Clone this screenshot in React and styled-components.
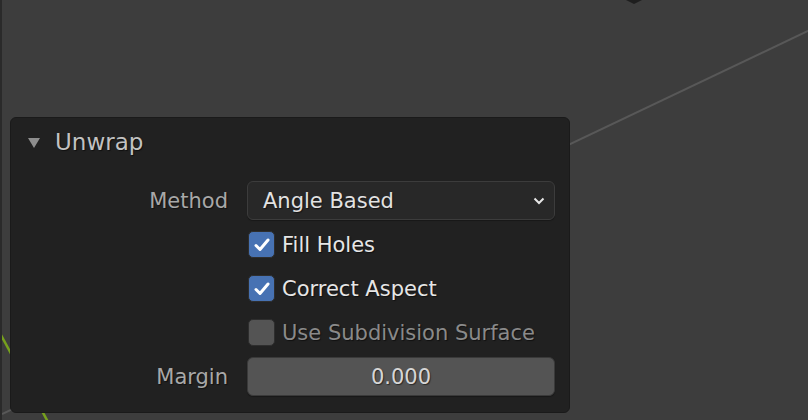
import React from "react";
import styled, { createGlobalStyle } from "styled-components";

const GlobalStyle = createGlobalStyle`
  html, body {
    margin: 0;
    padding: 0;
    background: #3d3d3d;
  }
  * {
    box-sizing: border-box;
  }
`;

const rows = [
  { type: "select", label: "Method", value: "Angle Based" },
  { type: "check", label: "Fill Holes", checked: true },
  { type: "check", label: "Correct Aspect", checked: true },
  { type: "check", label: "Use Subdivision Surface", checked: false, dim: true },
  { type: "number", label: "Margin", value: "0.000" },
];

const App = () => {
  return (
    <>
      <GlobalStyle />
      <Viewport>
        <Scene width="808" height="420" viewBox="0 0 808 420">
          <line x1="0" y1="414" x2="808" y2="30" stroke="#585858" strokeWidth="2" />
          <line x1="-1" y1="335" x2="46" y2="422" stroke="#76a01d" strokeWidth="2.5" />
          <path d="M624 0 L640 0 L632 4 Z" fill="#1e1e1e" />
        </Scene>

        <Panel>
          <PanelHeader>
            <Triangle />
            <Title>Unwrap</Title>
          </PanelHeader>
          <PanelBody>
            {rows.map((row) => (
              <React.Fragment key={row.label}>
                <Label>{row.type === "check" ? "" : row.label}</Label>
                {row.type === "select" && (
                  <Select>
                    <span>{row.value}</span>
                    <svg width="12" height="8" viewBox="0 0 12 8">
                      <path
                        d="M1.5 1.5 L6 6 L10.5 1.5"
                        fill="none"
                        stroke="#e6e6e6"
                        strokeWidth="2"
                      />
                    </svg>
                  </Select>
                )}
                {row.type === "check" && (
                  <CheckRow>
                    <CheckBox $checked={row.checked}>
                      {row.checked && (
                        <svg width="20" height="20" viewBox="0 0 20 20">
                          <path
                            d="M4 10.5 L8 14.5 L16 5"
                            fill="none"
                            stroke="#ffffff"
                            strokeWidth="3"
                            strokeLinecap="round"
                            strokeLinejoin="round"
                          />
                        </svg>
                      )}
                    </CheckBox>
                    <CheckText $dim={row.dim}>{row.label}</CheckText>
                  </CheckRow>
                )}
                {row.type === "number" && <NumberField>{row.value}</NumberField>}
              </React.Fragment>
            ))}
          </PanelBody>
        </Panel>
      </Viewport>
    </>
  );
};

const Viewport = styled.div`
  position: relative;
  width: 808px;
  height: 420px;
  overflow: hidden;
  background: #3d3d3d;
  border-left: 2px solid #2a2a2a;
  padding: 117px 0 0 8px;
  font-family: "DejaVu Sans", "Liberation Sans", sans-serif;
`;

const Scene = styled.svg`
  position: absolute;
  left: 0;
  top: 0;
`;

const Panel = styled.div`
  position: relative;
  width: 560px;
  height: 296px;
  background: #212121;
  border: 1px solid #1a1a1a;
  border-radius: 6px;
`;

const PanelHeader = styled.div`
  display: flex;
  align-items: center;
  height: 48px;
  padding-left: 17px;
  gap: 15px;
`;

const Triangle = styled.div`
  width: 0;
  height: 0;
  border-left: 6px solid transparent;
  border-right: 6px solid transparent;
  border-top: 10px solid #8e8e8e;
  margin-top: 1px;
`;

const Title = styled.div`
  font-size: 23px;
  color: #c2c2c2;
  text-shadow: 1px 1px 1px rgba(0, 0, 0, 0.55);
`;

const PanelBody = styled.div`
  display: grid;
  grid-template-columns: 217px 308px;
  grid-auto-rows: 39px;
  column-gap: 19px;
  row-gap: 5px;
  padding-top: 15px;
`;

const Label = styled.div`
  display: flex;
  align-items: center;
  justify-content: flex-end;
  font-size: 21px;
  color: #a8a8a8;
  text-shadow: 1px 1px 1px rgba(0, 0, 0, 0.5);
`;

const Select = styled.div`
  display: flex;
  align-items: center;
  justify-content: space-between;
  padding: 0 9px 0 15px;
  background: #282828;
  border: 1px solid #3c3c3c;
  border-radius: 6px;
  box-shadow: 0 1px 1px rgba(0, 0, 0, 0.3);
  font-size: 21px;
  color: #e2e2e2;
  text-shadow: 1px 1px 1px rgba(0, 0, 0, 0.5);
`;

const CheckRow = styled.div`
  display: flex;
  align-items: center;
  gap: 7px;
`;

const CheckBox = styled.div`
  display: flex;
  align-items: center;
  justify-content: center;
  width: 27px;
  height: 27px;
  margin-left: 1px;
  border-radius: 5px;
  border: 1px solid #2e2e2e;
  background: ${(p) => (p.$checked ? "#4772b3" : "#545454")};
`;

const CheckText = styled.div`
  font-size: 21px;
  color: ${(p) => (p.$dim ? "#8a8a8a" : "#e6e6e6")};
  text-shadow: 1px 1px 1px rgba(0, 0, 0, 0.5);
`;

const NumberField = styled.div`
  display: flex;
  align-items: center;
  justify-content: center;
  background: #545454;
  border: 1px solid #3a3a3a;
  border-radius: 6px;
  box-shadow: 0 1px 1px rgba(0, 0, 0, 0.3);
  font-size: 21px;
  color: #d6d6d6;
  text-shadow: 1px 1px 1px rgba(0, 0, 0, 0.5);
`;

export default App;
